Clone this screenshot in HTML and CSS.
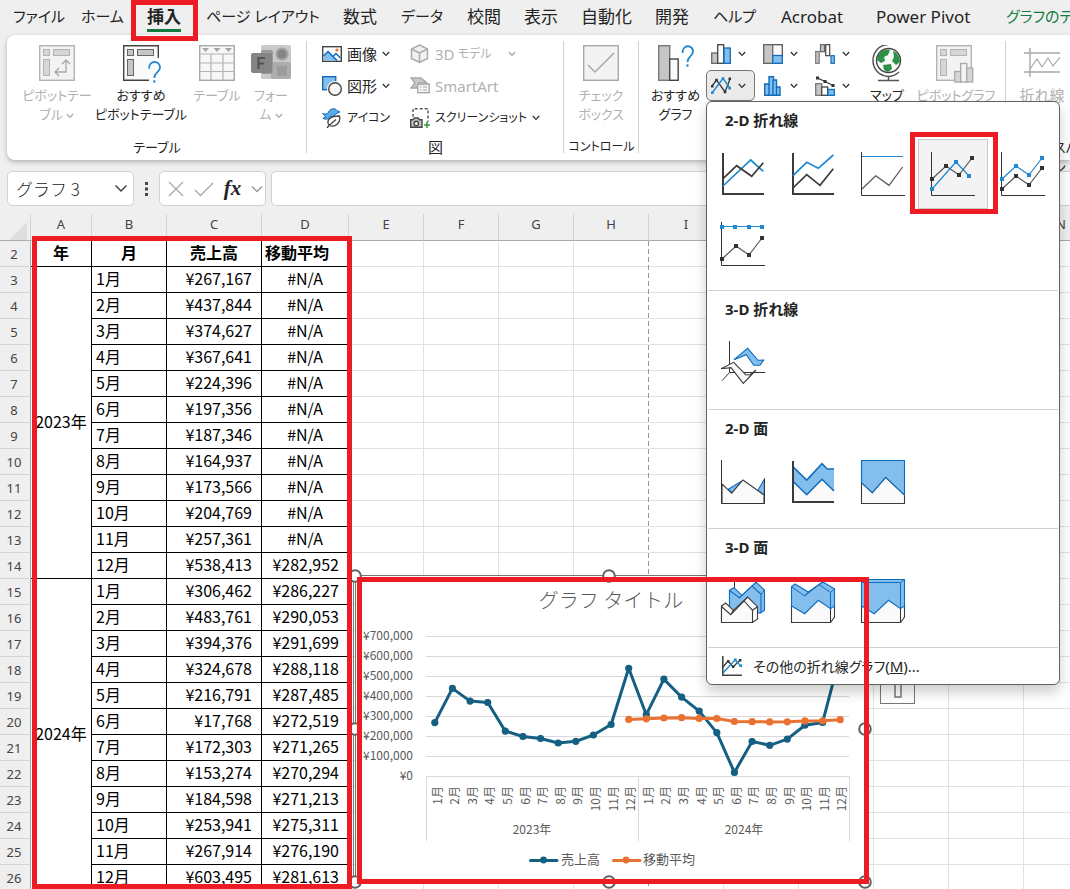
FILE: index.html
```html
<!DOCTYPE html>
<html lang="ja">
<head>
<meta charset="utf-8">
<meta name="viewport" content="width=device-width, initial-scale=1">
<title>グラフの挿入</title>
<link rel="stylesheet" href="styles.css">
</head>
<body>
<svg class="defs" aria-hidden="true">
  <symbol id="chev" viewBox="0 0 8 6"><path d="M.8 1L4 4.4L7.2 1" fill="none" stroke="currentColor" stroke-width="1.3"/></symbol>
  <symbol id="pivot" viewBox="0 0 36 36"><rect x=".7" y=".7" width="34.6" height="34.6" fill="#f3f3f3" stroke="#b3b3b3" stroke-width="1.4"/><g fill="#d6d6d6" stroke="#b3b3b3"><rect x="4.500" y="4.500" width="6" height="6"/><rect x="14.500" y="4.500" width="16" height="6"/><rect x="4.500" y="14.500" width="6" height="16"/></g></symbol>
</svg>
<div class="app">
  <nav class="tabs">
    <button>ファイル</button>
    <button>ホーム</button>
    <button class="current">挿入</button>
    <button>ページ レイアウト</button>
    <button class="kanji">数式</button>
    <button>データ</button>
    <button class="kanji">校閲</button>
    <button class="kanji">表示</button>
    <button class="kanji">自動化</button>
    <button class="kanji">開発</button>
    <button>ヘルプ</button>
    <button class="kanji">Acrobat</button>
    <button class="kanji">Power Pivot</button>
    <button class="context">グラフのデ</button>
  </nav>

  <section class="ribbon">
    <div class="group g-table">
      <div class="bigs">
        <button class="big off">
          <svg width="36" height="38" viewBox="0 0 36 38"><use href="#pivot" width="36" height="36"/><path d="M16 27H27V15M20 23L16 27L20 31M23 19L27 15L31 19" fill="none" stroke="#a8a8a8" stroke-width="1.3"/></svg>
          <span>ピボットテー<br>ブル <svg class="chev"><use href="#chev"/></svg></span>
        </button>
        <button class="big">
          <svg width="36" height="38" viewBox="0 0 36 38" overflow="visible"><path d="M35.300 13V.7H.7V35.300H26" fill="#fafafa" stroke="#444" stroke-width="1.4"/><g fill="#c8c6c4" stroke="#666"><rect x="4.500" y="4.500" width="6" height="6"/><rect x="14.500" y="4.500" width="16" height="6"/><rect x="4.500" y="14.500" width="6" height="16"/></g><path d="M26 23.500C26 14.500 37 15.500 37 22.500C37 27 31.300 27.500 31.300 33" fill="none" stroke="#1e88d0" stroke-width="1.8"/><rect x="30.300" y="35.300" width="2" height="2.400" fill="#1e88d0"/></svg>
          <span>おすすめ<br>ピボットテーブル</span>
        </button>
        <button class="big off">
          <svg width="36" height="38" viewBox="0 0 36 38"><rect x=".7" y=".7" width="34.600" height="34.600" fill="#f7f7f7" stroke="#a8a8a8" stroke-width="1.4"/><path d="M0 9H36M0 18H36M0 26.500H36M12 9V36M24 9V36" stroke="#b3b3b3" stroke-width="1.200"/><path d="M3 3H10L6.500 7ZM14.500 3H21.500L18 7ZM26 3H33L29.500 7Z" fill="#a6a6a6"/></svg>
          <span>テーブル</span>
        </button>
        <button class="big off">
          <svg width="40" height="38" viewBox="0 0 40 38"><rect x="10" y="0" width="30" height="34" rx="2" fill="#c9c9c9"/><rect x="20" y="17" width="20" height="17" rx="2" fill="#adadad"/><circle cx="31" cy="9" r="6.500" fill="#a2a2a2"/><circle cx="31" cy="9" r="4.500" fill="#868686"/><rect x="26" y="21" width="10" height="10" fill="#9c9c9c"/><rect x="10" y="5" width="12" height="24" rx="2" fill="#9b9b9b"/><rect x="0" y="8" width="21" height="20" rx="2" fill="#858585"/><path d="M7.500 24V13H14M7.500 18.500H13" fill="none" stroke="#555" stroke-width="2.200"/></svg>
          <span>フォー<br>ム <svg class="chev"><use href="#chev"/></svg></span>
        </button>
      </div>
      <div class="caption">テーブル</div>
    </div>

    <div class="group g-pics">
      <div class="rows">
        <button class="small kanji"><svg class="ic" viewBox="0 0 20 20"><rect x=".7" y="2.700" width="18.600" height="14.600" fill="#fff" stroke="#444" stroke-width="1.400"/><path d="M1.500 12L6 7.500L16 16.500H1.500Z" fill="#83beec"/><path d="M1.500 12L6 7.500L15 16.500M11 12.500L14 9.500L18.500 14" fill="none" stroke="#0f6cbd" stroke-width="1.500"/><circle cx="15" cy="6" r="1.600" fill="#e8762c"/></svg>画像<svg class="chev"><use href="#chev"/></svg></button>
        <button class="small off"><svg class="ic" viewBox="0 0 20 20"><path d="M9.500 1L17.500 5V14.500L9.500 18.500L1.500 14.500V5ZM1.500 5L9.500 9V18.500M9.500 9L17.500 5" fill="#f2f2f2" stroke="#ababab" stroke-width="1.500"/></svg><span class="kanji">3D</span>&nbsp;モデル<svg class="chev far"><use href="#chev"/></svg></button>
        <button class="small kanji"><svg class="ic" viewBox="0 0 20 20"><rect x=".7" y=".7" width="13" height="13" fill="#83beec" stroke="#0f6cbd" stroke-width="1.400"/><circle cx="13" cy="13" r="8" fill="#fff"/><circle cx="13" cy="13" r="6.300" fill="#fafafa" stroke="#444" stroke-width="1.400"/></svg>図形<svg class="chev"><use href="#chev"/></svg></button>
        <button class="small off"><svg class="ic" viewBox="0 0 20 20"><path d="M1 2H11L17 7H9L7 12H1L5 7Z" fill="#c8c8c8" stroke="#a8a8a8" stroke-width="1.400"/><rect x="7.700" y="8.200" width="11.600" height="8.500" fill="#f5f5f5" stroke="#a8a8a8" stroke-width="1.400"/><path d="M10 11H11.500M13 11H17M10 14H11.500M13 14H17" stroke="#a8a8a8"/></svg><span class="kanji">SmartArt</span></button>
        <button class="small"><svg class="ic" viewBox="0 0 20 20"><path d="M.5 5.500C2.500 6.500 5 6 6.500 4.500C7 .5 13-.5 15 2.500L18 4L14.500 5.500C13.500 8 10.500 8 8 9C6 11.500 3 12 1 10L4 9L.5 5.500Z" fill="#5aa9e6" stroke="#0f6cbd"/><path d="M7 17.500C3.500 11.500 9 8 17.500 8C19 14 14 20 7 17.500L14 11.500M7 17.500L5 20" fill="#fff" stroke="#444" stroke-width="1.300"/></svg>アイコン</button>
        <button class="small"><svg class="ic" viewBox="0 0 20 20" overflow="visible"><path d="M3 9V.7H18V14" fill="none" stroke="#555" stroke-width="1.400" stroke-dasharray="3 2"/><path d="M.7 11.700H3L4.500 10H8L9.500 11.700H12V19.300H.7Z" fill="#c8c6c4" stroke="#444" stroke-width="1.400"/><circle cx="6.300" cy="15.400" r="2.200" fill="#fff" stroke="#444" stroke-width="1.400"/><path d="M17 14V20M14 17H20" stroke="#2ea043" stroke-width="1.600"/></svg>スクリーンショット<svg class="chev"><use href="#chev"/></svg></button>
      </div>
      <div class="caption kanji">図</div>
    </div>

    <div class="group g-ctl">
      <div class="bigs">
        <button class="big off">
          <svg width="36" height="38" viewBox="0 0 36 38"><rect x=".7" y=".7" width="34.600" height="34.600" fill="#f3f3f3" stroke="#a8a8a8" stroke-width="1.400"/><path d="M5 20L12 27L31 8" fill="none" stroke="#a8a8a8" stroke-width="1.500"/></svg>
          <span>チェック<br>ボックス</span>
        </button>
      </div>
      <div class="caption">コントロール</div>
    </div>

    <div class="group g-charts">
      <button class="big rec">
        <svg width="36" height="38" viewBox="0 0 36 38" overflow="visible"><rect x=".7" y=".7" width="11" height="34.600" fill="#c8c6c4" stroke="#777" stroke-width="1.400"/><rect x="11.700" y="14" width="8.500" height="21.300" fill="#fafafa" stroke="#444" stroke-width="1.400"/><path d="M24.500 8C24.500-1 35-.5 35 6.500C35 11 29.500 11.500 29.500 17" fill="none" stroke="#1e88d0" stroke-width="1.800"/><rect x="28.500" y="19.300" width="2" height="2.400" fill="#1e88d0"/></svg>
        <span>おすすめ<br>グラフ</span>
      </button>
      <div class="kinds">
        <button aria-label="縦棒"><svg class="ic" viewBox="0 0 20 20"><rect x=".7" y="9" width="6" height="10.300" fill="#c8c6c4" stroke="#666" stroke-width="1.300"/><rect x="6.700" y=".7" width="6" height="18.600" fill="#fafafa" stroke="#444" stroke-width="1.300"/><rect x="13" y="4" width="6.300" height="15.300" fill="#83beec" stroke="#0f6cbd" stroke-width="1.300"/></svg><svg class="chev"><use href="#chev"/></svg></button>
        <button aria-label="階層"><svg class="ic" viewBox="0 0 20 20"><rect x=".7" y=".7" width="18.600" height="18.600" fill="#fafafa" stroke="#555" stroke-width="1.300"/><rect x=".7" y=".7" width="9" height="18.600" fill="#c8c6c4" stroke="#666" stroke-width="1.300"/><rect x="9.700" y="11.500" width="9.600" height="7.800" fill="#83beec" stroke="#0f6cbd" stroke-width="1.300"/></svg><svg class="chev"><use href="#chev"/></svg></button>
        <button aria-label="ウォーターフォール"><svg class="ic" viewBox="0 0 20 20"><rect x=".7" y="7.500" width="3.500" height="11.800" fill="#c8c6c4" stroke="#777" stroke-width="1.200"/><rect x="5.500" y=".7" width="4" height="7" fill="#c8c6c4" stroke="#666" stroke-width="1.200"/><rect x="10.700" y=".7" width="4" height="11" fill="#fff" stroke="#444" stroke-width="1.200"/><rect x="16" y="11.700" width="3.300" height="7.600" fill="#83beec" stroke="#0f6cbd" stroke-width="1.200"/></svg><svg class="chev"><use href="#chev"/></svg></button>
        <button aria-label="折れ線" class="open"><svg class="ic" viewBox="0 0 20 20"><path d="M1 10L5.500 4L14 16L19 3" fill="none" stroke="#333" stroke-width="1.300"/><path d="M1 17L12 2.500L19 12" fill="none" stroke="#1e88d0" stroke-width="1.400"/><path d="M0 9H2.500V11.500H0ZM4.200 2.700H6.800V5.300H4.200ZM12.700 14.700H15.300V17.300H12.700ZM17.500 1.500H20V4H17.500Z" fill="#333"/><path d="M0 15.500H2.600V18.100H0ZM10.700 1.200H13.300V3.800H10.700ZM17.400 11H20V13.600H17.400Z" fill="#1e88d0"/></svg><svg class="chev"><use href="#chev"/></svg></button>
        <button aria-label="統計"><svg class="ic" viewBox="0 0 20 20"><path d="M1.700 19.300V8H6V.7H10.500V4H13.500V11H17V19.300Z" fill="#83beec" stroke="#0f6cbd" stroke-width="1.400"/><path d="M6 8V19M10 4V19M13.500 11V19" stroke="#0f6cbd" stroke-width="1.400"/></svg><svg class="chev"><use href="#chev"/></svg></button>
        <button aria-label="組み合わせ"><svg class="ic" viewBox="0 0 20 20"><rect x=".7" y="7.700" width="6" height="11.600" fill="#c8c6c4" stroke="#777" stroke-width="1.300"/><rect x="6.700" y="11" width="6" height="8.300" fill="#fff" stroke="#444" stroke-width="1.300"/><rect x="13" y="13.500" width="6.300" height="5.800" fill="#83beec" stroke="#0f6cbd" stroke-width="1.300"/><path d="M2.500 2L10 5.500L18 9.500" stroke="#333" stroke-width="1.200"/><path d="M1 .5H4V3.500H1ZM8.500 4H11.500V7H8.500ZM16.500 8H19.500V11H16.500Z" fill="#333"/></svg><svg class="chev"><use href="#chev"/></svg></button>
      </div>
      <button class="big map">
        <svg width="36" height="38" viewBox="0 0 36 38"><circle cx="19.500" cy="15.500" r="12" fill="#fafafa" stroke="#444" stroke-width="1.400"/><path d="M9 10C12 5 17 4 21 5L19 10L15 12L16 16L12 18L8 15ZM24 6C29 8 31 12 31 17L27 20L23 16L25 12ZM14 20L22 19L23 24L19 27L15 25Z" fill="#2e9148"/><path d="M19 -.5C-1 1 -1 30 19 31.500C23 31.500 26 30.500 30 27M19.500 31.500V35.500M9 35.500H30" fill="none" stroke="#555" stroke-width="1.500"/></svg>
        <span>マップ</span>
      </button>
      <button class="big off pg">
        <svg width="40" height="38" viewBox="0 0 40 38"><use href="#pivot" width="36" height="36"/><g fill="#d6d6d6" stroke="#a8a8a8" stroke-width="1.300"><rect x="18.700" y="26.500" width="6" height="10.500"/><rect x="24.700" y="18.500" width="6" height="18.500" fill="#f5f5f5"/><rect x="30.700" y="23" width="6" height="14"/></g></svg>
        <span>ピボットグラフ</span>
      </button>
    </div>

    <div class="group g-spark">
      <button class="big off">
        <svg width="36" height="38" viewBox="0 0 36 38"><path d="M0 8H36M0 27H36M6 3V32" stroke="#a8a8a8" stroke-width="1.400"/><path d="M6 24L13 14L18 22L24 13L29 21L36 12" fill="none" stroke="#a8a8a8" stroke-width="1.200"/></svg>
        <span class="kana-kanji">折れ線</span>
      </button>
      <div class="caption">スパークライン</div>
    </div>
  </section>

  <div class="formula">
    <div class="box name"><input aria-label="名前ボックス" value="グラフ 3"><button aria-label="名前の一覧"><svg width="14" height="9" viewBox="0 0 14 9"><path d="M1.500 1.500L7 7L12.500 1.500" fill="none" stroke="#444" stroke-width="1.500"/></svg></button></div>
    <svg class="dots" width="3" height="14" viewBox="0 0 3 14"><path d="M0 0H3V3H0ZM0 5.500H3V8.500H0ZM0 11H3V14H0Z" fill="#444"/></svg>
    <div class="box fx">
      <button aria-label="キャンセル"><svg width="16" height="16" viewBox="0 0 16 16"><path d="M1 1L15 15M15 1L1 15" stroke="#a8a8a8" stroke-width="1.300"/></svg></button>
      <button aria-label="入力"><svg width="20" height="16" viewBox="0 0 20 16"><path d="M1 9L6.500 14.500L19 2" fill="none" stroke="#a8a8a8" stroke-width="1.300"/></svg></button>
      <button aria-label="関数の挿入" class="fn">fx</button>
      <button aria-label="関数の一覧" class="pale"><svg width="12" height="8" viewBox="0 0 12 8"><path d="M1 1.500L6 6.500L11 1.500" fill="none" stroke="#999" stroke-width="1.300"/></svg></button>
    </div>
    <input class="box expr" aria-label="数式バー">
  </div>

  <main class="sheet">
    <table class="grid">
      <colgroup><col class="c-no"><col class="c-a"><col class="c-b"><col class="c-c"><col class="c-d"><col class="c-x" span="10"></colgroup>
      <thead><tr><th class="corner"><svg width="18" height="18" viewBox="0 0 18 18"><path d="M18 0V18H0Z" fill="#dedede"/></svg></th><th>A</th><th>B</th><th>C</th><th>D</th><th>E</th><th>F</th><th>G</th><th>H</th><th>I</th><th>J</th><th>K</th><th>L</th><th>M</th><th>N</th></tr></thead>
      <tbody>
        <tr class="titles"><th>2</th><td>年</td><td>月</td><td>売上高</td><td class="left">移動平均</td><td class="rest" colspan="10"></td></tr>
        <tr><th>3</th><td class="year" rowspan="12">2023年</td><td>1月</td><td>¥267,167</td><td class="na">#N/A</td><td class="rest" colspan="10"></td></tr>
        <tr><th>4</th><td>2月</td><td>¥437,844</td><td class="na">#N/A</td><td class="rest" colspan="10"></td></tr>
        <tr><th>5</th><td>3月</td><td>¥374,627</td><td class="na">#N/A</td><td class="rest" colspan="10"></td></tr>
        <tr><th>6</th><td>4月</td><td>¥367,641</td><td class="na">#N/A</td><td class="rest" colspan="10"></td></tr>
        <tr><th>7</th><td>5月</td><td>¥224,396</td><td class="na">#N/A</td><td class="rest" colspan="10"></td></tr>
        <tr><th>8</th><td>6月</td><td>¥197,356</td><td class="na">#N/A</td><td class="rest" colspan="10"></td></tr>
        <tr><th>9</th><td>7月</td><td>¥187,346</td><td class="na">#N/A</td><td class="rest" colspan="10"></td></tr>
        <tr><th>10</th><td>8月</td><td>¥164,937</td><td class="na">#N/A</td><td class="rest" colspan="10"></td></tr>
        <tr><th>11</th><td>9月</td><td>¥173,566</td><td class="na">#N/A</td><td class="rest" colspan="10"></td></tr>
        <tr><th>12</th><td>10月</td><td>¥204,769</td><td class="na">#N/A</td><td class="rest" colspan="10"></td></tr>
        <tr><th>13</th><td>11月</td><td>¥257,361</td><td class="na">#N/A</td><td class="rest" colspan="10"></td></tr>
        <tr><th>14</th><td>12月</td><td>¥538,413</td><td>¥282,952</td><td class="rest" colspan="10"></td></tr>
        <tr><th>15</th><td class="year" rowspan="12">2024年</td><td>1月</td><td>¥306,462</td><td>¥286,227</td><td class="rest" colspan="10"></td></tr>
        <tr><th>16</th><td>2月</td><td>¥483,761</td><td>¥290,053</td><td class="rest" colspan="10"></td></tr>
        <tr><th>17</th><td>3月</td><td>¥394,376</td><td>¥291,699</td><td class="rest" colspan="10"></td></tr>
        <tr><th>18</th><td>4月</td><td>¥324,678</td><td>¥288,118</td><td class="rest" colspan="10"></td></tr>
        <tr><th>19</th><td>5月</td><td>¥216,791</td><td>¥287,485</td><td class="rest" colspan="10"></td></tr>
        <tr><th>20</th><td>6月</td><td>¥17,768</td><td>¥272,519</td><td class="rest" colspan="10"></td></tr>
        <tr><th>21</th><td>7月</td><td>¥172,303</td><td>¥271,265</td><td class="rest" colspan="10"></td></tr>
        <tr><th>22</th><td>8月</td><td>¥153,274</td><td>¥270,294</td><td class="rest" colspan="10"></td></tr>
        <tr><th>23</th><td>9月</td><td>¥184,598</td><td>¥271,213</td><td class="rest" colspan="10"></td></tr>
        <tr><th>24</th><td>10月</td><td>¥253,941</td><td>¥275,311</td><td class="rest" colspan="10"></td></tr>
        <tr><th>25</th><td>11月</td><td>¥267,914</td><td>¥276,190</td><td class="rest" colspan="10"></td></tr>
        <tr><th>26</th><td>12月</td><td>¥603,495</td><td>¥281,613</td><td class="rest" colspan="10"></td></tr>
      </tbody>
    </table>
    <div class="pagebreak"></div>
  </main>

  <svg class="chart" viewBox="348 568 526 321" role="img" aria-label="売上高と移動平均の折れ線グラフ">
    <rect x="355.500" y="575.500" width="510" height="306" fill="#fff" stroke="#767676"/>
    <path d="M353.500 582V876" stroke="#767676"/>
    <text class="t-title" x="611" y="608">グラフ タイトル</text>
    <path d="M426 636.500H849M426 656.500H849M426 676.500H849M426 696.500H849M426 716.500H849M426 736.500H849M426 756.500H849M426 776.500H849M426.500 776V841M638.500 776V841M849.500 776V841" stroke="#d9d9d9" fill="none"/>
    <g class="t-axis">
      <text x="413" y="640">¥700,000</text><text x="413" y="660">¥600,000</text><text x="413" y="680">¥500,000</text><text x="413" y="700">¥400,000</text><text x="413" y="720">¥300,000</text><text x="413" y="740">¥200,000</text><text x="413" y="760">¥100,000</text><text x="413" y="780">¥0</text>
      <g transform="rotate(-90)">
        <text x="-786" y="442">1月</text><text x="-786" y="459">2月</text><text x="-786" y="477">3月</text><text x="-786" y="494">4月</text><text x="-786" y="512">5月</text><text x="-786" y="530">6月</text><text x="-786" y="547">7月</text><text x="-786" y="565">8月</text><text x="-786" y="582">9月</text><text x="-786" y="600">10月</text><text x="-786" y="618">11月</text><text x="-786" y="635">12月</text>
        <text x="-786" y="653">1月</text><text x="-786" y="670">2月</text><text x="-786" y="688">3月</text><text x="-786" y="706">4月</text><text x="-786" y="723">5月</text><text x="-786" y="741">6月</text><text x="-786" y="758">7月</text><text x="-786" y="776">8月</text><text x="-786" y="794">9月</text><text x="-786" y="811">10月</text><text x="-786" y="829">11月</text><text x="-786" y="846">12月</text>
      </g>
      <g class="mid"><text x="532" y="834">2023年</text><text x="744" y="834">2024年</text></g>
    </g>
    <defs>
      <marker id="m1" markerWidth="8" markerHeight="8" refX="4" refY="4" markerUnits="userSpaceOnUse"><circle cx="4" cy="4" r="3.600" fill="#156082"/></marker>
      <marker id="m2" markerWidth="8" markerHeight="8" refX="4" refY="4" markerUnits="userSpaceOnUse"><circle cx="4" cy="4" r="3.600" fill="#e97132"/></marker>
    </defs>
    <polyline class="s1" points="434.800,722.600 452.400,688.400 470.100,701.100 487.700,702.500 505.300,731.100 522.900,736.500 540.600,738.500 558.200,743 575.800,741.300 593.400,735 611.100,724.500 628.700,668.300 646.300,714.700 663.900,679.200 681.600,697.100 699.200,711.100 716.800,732.600 734.400,772.400 752.100,741.500 769.700,745.300 787.300,739.100 804.900,725.200 822.600,722.400 840.200,655.300"/>
    <polyline class="s2" points="628.700,719.400 646.300,718.800 663.900,718 681.600,717.700 699.200,718.400 716.800,718.500 734.400,721.500 752.100,721.700 769.700,721.900 787.300,721.800 804.900,720.900 822.600,720.800 840.200,719.700"/>
    <path d="M530.500 860.500H557" stroke="#156082" stroke-width="3" stroke-linecap="round"/><circle cx="543.500" cy="860" r="3.400" fill="#156082"/>
    <path d="M613.500 860.500H640" stroke="#e97132" stroke-width="3" stroke-linecap="round"/><circle cx="626" cy="860" r="3.400" fill="#e97132"/>
    <g class="t-legend"><text x="561" y="864">売上高</text><text x="643" y="864">移動平均</text></g>
    <g fill="#fff" stroke="#606060" stroke-width="2"><circle cx="355" cy="576" r="5.800"/><circle cx="609" cy="576" r="5.800"/><circle cx="355" cy="729" r="5.800"/><circle cx="865" cy="729" r="5.800"/><circle cx="355" cy="882" r="5.800"/><circle cx="609" cy="882" r="5.800"/><circle cx="865" cy="882" r="5.800"/></g>
  </svg>
  <button class="filter" aria-label="グラフ フィルター"><svg width="8" height="14" viewBox="0 0 8 14"><rect x="1" y="0" width="6" height="13" fill="#fff" stroke="#777" stroke-width="1.500"/></svg></button>

  <div class="menu">
    <section>
      <h2>2-D 折れ線</h2>
      <div class="tiles">
        <button aria-label="折れ線"><svg viewBox="0 0 44 44"><path class="ax2" d="M2 1V42H43"/><path class="bl2" d="M2 34L29.700 8L42.300 19.300"/><path class="bk2" d="M2 26.700L15.700 13.700L30.700 24.300L42.300 10.700"/></svg></button>
        <button aria-label="積み上げ折れ線"><svg viewBox="0 0 44 44"><path class="ax2" d="M2 1V42H43"/><path class="bl2" d="M2 23.700L15.700 10.300L27.300 16.300L42.300 3"/><path class="bk2" d="M2 36L15.700 22.700L29 33.300L42.300 16.700"/></svg></button>
        <button aria-label="100% 積み上げ折れ線"><svg viewBox="0 0 44 44"><path class="ax" d="M.5 0V43.500H44"/><path class="bl" d="M1 4.500H42"/><path class="bk" d="M1 37L14.700 23.700L28 33.300L41.700 15"/></svg></button>
        <button aria-label="マーカー付き折れ線" class="picked"><svg viewBox="0 0 44 44"><path class="ax" d="M.5 0V43.500H44"/><path class="bk" d="M1 27L15 14L28 23L41 6"/><path class="bl" d="M1 37L25 10L38 24"/><path class="mk" d="M-1 25h4v4h-4zM13 12h4v4h-4zM26 21h4v4h-4zM39 4h4v4h-4z"/><path class="mb" d="M-1 35h4v4h-4zM23 8h4v4h-4zM36 22h4v4h-4z"/></svg></button>
        <button aria-label="マーカー付き積み上げ折れ線"><svg viewBox="0 0 44 44"><path class="ax" d="M.5 0V43.500H44"/><path class="bk" d="M1 37L15 24L28 33L41 16"/><path class="bl" d="M1 27L15 14L28 23L41 6"/><path class="mb" d="M-1 25h4v4h-4zM13 12h4v4h-4zM26 21h4v4h-4zM39 4h4v4h-4z"/><path class="mk" d="M-1 35h4v4h-4zM13 22h4v4h-4zM26 31h4v4h-4zM39 14h4v4h-4z"/></svg></button>
        <button aria-label="マーカー付き 100% 積み上げ折れ線"><svg viewBox="0 0 44 44"><path class="ax" d="M.5 0V43.500H44"/><path class="bl" d="M1 4.500H41"/><path class="bk" d="M1 37L15 24L28 33L41 16"/><path class="mb" d="M-1 3h4v4h-4zM12 3h4v4h-4zM26 3h4v4h-4zM39 3h4v4h-4z"/><path class="mk" d="M-1 35h4v4h-4zM13 22h4v4h-4zM26 31h4v4h-4zM39 14h4v4h-4z"/></svg></button>
      </div>
    </section>
    <section>
      <h2>3-D 折れ線</h2>
      <div class="tiles">
        <button aria-label="3-D 折れ線"><svg viewBox="0 0 44 44"><path class="ax" d="M8.500 0V31.500H44M8.500 31.500L1 39.700"/><path class="fb" d="M13 18.700L26.700 7.300L37 19.300L42.700 19L39 24.300H32.700L25.300 13.700Z"/><path class="fw" d="M0 27.700L12.700 21.300L25 34L29.500 33.500L35 29L22.300 42.300L10 26.700Z"/></svg></button>
      </div>
    </section>
    <section>
      <h2>2-D 面</h2>
      <div class="tiles">
        <button aria-label="面"><svg viewBox="0 0 44 44"><path class="fb" d="M7.300 29.300L21.300 20.700L11 32.500ZM43.300 19.300L36.700 30.700L43.300 34.700Z"/><path class="fw" d="M1 24L10.700 33.300L22 20L43 35V43.500H1Z"/><path class="ax" d="M.5 0V43.500H43.500V19"/></svg></button>
        <button aria-label="積み上げ面"><svg viewBox="0 0 44 44"><path fill="#fafafa" d="M2 21L15.700 34.700L31 19.300L43 31V42H2Z"/><path fill="#83beec" d="M2 6.700L15.700 20L31 3.700L36.300 9H43V31L31 19.300L15.700 34.700L2 21.300Z"/><path d="M2 6.700L15.700 20L31 3.700L36.300 9H43M43 31L31 19.300L15.700 34.700L2 21.300" fill="none" stroke="#0f6cbd" stroke-width="1.600"/><path class="ax2" d="M2 1V42H43"/></svg></button>
        <button aria-label="100% 積み上げ面"><svg viewBox="0 0 44 44"><path class="fw" d="M.5 22.700L11.300 32.700L24.700 17.300L43.500 35V43.500H.5Z"/><path class="fb" d="M.5 .5H43.500V35L24.700 17.300L11.300 32.700L.5 22.700Z"/></svg></button>
      </div>
    </section>
    <section>
      <h2>3-D 面</h2>
      <div class="tiles">
        <button aria-label="3-D 面"><svg viewBox="0 0 44 44"><path class="ax" d="M13.500 0V12"/><path class="fb" d="M8.500 11.300L13 8.700L21 16.300L35 3.300L43.500 11V31.300L40 33.700H8.500Z"/><path class="fb" d="M8.500 11.500L18.500 18.700L31 7L40 15.300V33.700H8.500Z"/><path class="bb" d="M18.500 18.700L21 16.300M31 7L35 3.300M40 15.300L43.500 11"/><path class="fw" d="M.5 27L4.700 24L12.300 31.300L26.700 18L36.500 27.700V40L31.500 43.500H.5Z"/><path class="fw" d="M.5 27.500L9.700 35.700L23 22L31.500 31.300V43.500H.5ZM9.700 35.700L12.300 31.300M23 22L26.700 18M31.500 31.300L36.500 27.700"/></svg></button>
        <button aria-label="3-D 積み上げ面"><svg viewBox="0 0 44 44"><path class="fw" d="M.5 26V43.500H39.500L43.500 38V25L27 18Z"/><path class="ax" d="M39.500 28V43.500"/><path class="fb" d="M.5 7.700L4 5L17.300 13L31.700 3L43.500 9.700V27L39.500 29.700L27.300 21.300L13.700 34.700L.5 27Z"/><path class="bb" d="M.5 7.700L13.700 17L28 5.500L39.500 13.500V29.700M13.700 17L17.300 13M28 5.500L31.700 3M39.500 13.500L43.500 9.700"/></svg></button>
        <button aria-label="3-D 100% 積み上げ面"><svg viewBox="0 0 44 44"><path class="fw" d="M.5 26V43.500H39.500L43.500 38V25L27 18Z"/><path class="ax" d="M39.500 28V43.500"/><path class="fb" d="M.5 3.500L3.500 .5H43.500V27L39.500 29.700L27.500 21.300L13.300 34.700L.5 27Z"/><path class="bb" d="M.5 3.500H39.500V29.700M39.500 3.500L43.500 .5"/></svg></button>
      </div>
    </section>
    <button class="more"><svg width="20" height="20" viewBox="0 0 20 20"><path d="M.8 0V19.200H20" fill="none" stroke="#444" stroke-width="1.600"/><path d="M1 11L6 5L11 11L18 4" fill="none" stroke="#333" stroke-width="1.200"/><path d="M1 17L13 4L19 10" fill="none" stroke="#1e88d0" stroke-width="1.400"/><path d="M5 4h2.400v2.400h-2.400zM17 3h2.400v2.400h-2.400zM10 9.500h2.400v2.400h-2.400z" fill="#333"/><path d="M12 2.500h2.600v2.600h-2.600zM17.400 8.500h2.600v2.600h-2.600z" fill="#1e88d0"/></svg><span>その他の折れ線グラフ<span class="kanji">(<u>M</u>)...</span></span></button>
  </div>

  <div class="mark mark-tab"></div>
  <div class="mark mark-table"></div>
  <div class="mark mark-chart"></div>
  <div class="mark mark-tile"></div>
</div>
</body>
</html>
```

FILE: styles.css
```css
* { box-sizing: border-box; }
body { margin: 0; font-family: "Noto Sans", "Noto Sans CJK JP", sans-serif; font-size: 13px; color: #242424; background: #efefef; font-feature-settings: "palt"; }
button, input { font: inherit; font-feature-settings: inherit; color: inherit; background: none; border: 0; padding: 0; margin: 0; white-space: nowrap; }
svg { flex: none; display: block; }
.defs { position: absolute; width: 0; height: 0; }
.app { position: relative; height: 100vh; overflow: hidden; display: flex; flex-direction: column; }

.tabs { display: grid; grid-template-columns: 68px 66px 59px 137px 58px 66px 57px 57px 74px 58px 68px 95px 130px auto; height: 35px; flex: none; padding-left: 13px; font-size: 15px; }
.tabs button { text-align: left; height: 33px; line-height: 33px; justify-self: start; }
.tabs .kanji { font-size: 17px; }
.tabs .current { font-size: 17px; font-weight: 700; background: linear-gradient(#107c41, #107c41) 0 29px / 100% 3px no-repeat; }
.tabs .context { color: #107c41; }

.ribbon { display: flex; flex: none; height: 125px; margin-left: 7px; background: #fff; border-radius: 8px 0 0 8px; box-shadow: 0 2px 5px rgba(0, 0, 0, .25); }
.group { position: relative; flex: none; padding-top: 3px; }
.group::after { content: ""; position: absolute; right: 0; top: 6px; bottom: 7px; width: 1px; background: #d1d1d1; }
.g-table { width: 300px; }
.g-pics { width: 257px; }
.g-ctl { width: 75px; }
.g-charts { width: 367px; display: flex; }
.g-spark { width: 120px; }
.caption { text-align: center; line-height: 20px; height: 20px; font-size: 13px; }
.caption.kanji { font-size: 15px; }
.g-ctl .caption { font-size: 12px; }
.g-spark .caption { text-align: left; padding-left: 48px; }
.bigs { display: flex; height: 99px; }
.big { display: flex; flex-direction: column; align-items: center; justify-content: flex-start; padding-top: 7px; gap: 3px; line-height: 19px; height: 99px; }
.g-table .big:nth-child(1) { width: 100px; }
.g-table .big:nth-child(2) { width: 68px; }
.g-table .big:nth-child(3) { width: 84px; }
.g-table .big:nth-child(4) { width: 24px; }
.g-ctl .big { width: 74px; }
.rec { width: 67px; padding-left: 6px; }
.map { width: 56px; }
.pg { width: 82px; }
.g-spark .big { width: 72px; height: 99px; }
.kana-kanji { font-size: 15px; }
.off { color: #b1b1b1; }
.chev { width: 8px; height: 6px; display: inline-block; color: #333; }
.off .chev { color: #a8a8a8; }
.rows { display: grid; grid-template-columns: 88px auto; grid-auto-rows: 32px; padding-left: 15px; height: 99px; justify-content: start; }
.small { display: flex; align-items: center; font-size: 12px; line-height: 18px; text-align: left; }
.small .ic { margin-right: 5px; }
.small .chev { margin-left: 5px; }
.small .far { margin-left: 16px; }
.ic { width: 20px; height: 20px; }
.small.kanji, .small .kanji { font-size: 15px; }
.kinds { display: grid; grid-template-columns: 49px 49px 49px; grid-auto-rows: 31px; column-gap: 3px; row-gap: 1px; }
.kinds button { display: flex; align-items: center; gap: 7px; padding-left: 4px; border: 1px solid transparent; border-radius: 5px; }
.kinds .open { background: #ebebeb; border-color: #777; }

.formula { display: flex; flex: none; align-items: center; height: 35px; margin: 11px 0 8px 7px; }
.box { height: 35px; background: #fff; border: 1px solid #d1d1d1; border-radius: 5px; display: flex; align-items: center; }
.name { width: 127px; padding: 0 5px 0 8px; justify-content: space-between; }
.name input { width: 90px; font-family: "Noto Sans CJK JP", sans-serif; font-size: 17px; font-weight: 300; font-feature-settings: normal; }
.dots { margin: 0 11px 0 11px; }
.fx { width: 107px; padding: 0 2px 0 8px; justify-content: space-between; }
.fn { font-family: "Liberation Serif", serif; font-style: italic; font-weight: 700; font-size: 21px; }
.expr { flex: 1; margin-left: 5px; border-radius: 5px 0 0 5px; border-right: 0; min-width: 0; }

.sheet { position: relative; flex: 1; min-height: 0; overflow: hidden; background: #fff; }
.grid { table-layout: fixed; width: 1099px; border-collapse: separate; border-spacing: 0; font-family: "Noto Sans CJK JP", sans-serif; font-size: 16px; font-weight: 400; font-feature-settings: normal; color: #000; }
.c-no { width: 31px; }
.c-a { width: 61px; }
.c-b, .c-x { width: 75px; }
.c-c { width: 95px; }
.c-d { width: 87px; }
.grid th, .grid td { padding: 0; height: 26px; line-height: 22px; white-space: nowrap; overflow: hidden; border-right: 1px solid #000; border-bottom: 1px solid #000; text-align: right; }
.grid td { padding-bottom: 3px; }
.grid th { background: #efefef; font-family: "Noto Sans", sans-serif; font-size: 13px; font-weight: 400; color: #444; text-align: center; border-color: #d4d4d4; }
.grid thead th { border-bottom-color: #ababab; height: 27px; line-height: 20px; padding-bottom: 6px; }
.grid tbody th { border-right-color: #ababab; padding-right: 2px; }
.grid .corner { padding: 7px 0 0 9px; }
.grid td:nth-last-child(4) { text-align: left; padding-left: 4px; }
.grid td:nth-last-child(3), .grid td:nth-last-child(2) { padding-right: 9px; }
.grid td.year { text-align: center; padding: 0 0 4px; }
.grid td.na.na { text-align: center; padding-right: 0; }
.grid .titles td.titles, .grid tr.titles td { text-align: center; font-weight: 700; padding-left: 0; padding-right: 0; }
.grid tr.titles td.left { text-align: left; padding-left: 3px; }
.grid td.rest { border-right: 0; border-bottom-color: #e1e1e1; background: repeating-linear-gradient(to right, transparent 0 74px, #e1e1e1 74px 75px); }
.pagebreak { position: absolute; left: 648px; top: 27px; bottom: 0; width: 1px; background: repeating-linear-gradient(#999 0 5px, #fff 5px 8px); }

.chart { position: absolute; left: 348px; top: 568px; width: 526px; height: 321px; font-family: "Noto Sans CJK JP", sans-serif; font-weight: 400; font-feature-settings: normal; fill: #595959; }
.t-title { font-size: 20px; font-weight: 300; text-anchor: middle; }
.t-axis { font-size: 12px; text-anchor: end; }
.mid { text-anchor: middle; }
.t-legend { font-size: 13px; }
.s1, .s2 { fill: none; stroke-width: 3; stroke-linejoin: round; stroke-linecap: round; }
.s1 { stroke: #156082; marker-start: url(#m1); marker-mid: url(#m1); marker-end: url(#m1); }
.s2 { stroke: #e97132; marker-start: url(#m2); marker-mid: url(#m2); marker-end: url(#m2); }
.filter { position: absolute; left: 880px; top: 669px; width: 35px; height: 35px; border: 1px solid #767676; background: #fff; display: flex; justify-content: center; align-items: flex-end; padding-bottom: 5px; }

.menu { position: absolute; left: 706px; top: 101px; width: 354px; padding: 0 1px; background: #fff; border: 1px solid #616161; border-radius: 6px; box-shadow: 0 7px 13px rgba(0, 0, 0, .2); }
.menu section { border-bottom: 1px solid #d1d1d1; padding-bottom: 11px; }
.menu h2 { margin: 0; padding-left: 17px; font-size: 15px; line-height: 37px; font-weight: 700; }
.tiles { display: grid; grid-template-columns: repeat(5, 70px); grid-auto-rows: 70px; }
.tiles button { display: flex; align-items: center; justify-content: center; }
.tiles svg { width: 44px; height: 44px; overflow: visible; }
.tiles .picked { background: #f3f3f3; border: 1px solid #c8c8c8; }
.ax, .ax2, .bk, .bl, .bk2, .bl2, .bb { fill: none; }
.ax { stroke: #333; stroke-width: 1; }
.ax2 { stroke: #3b3b3b; stroke-width: 2; }
.bk { stroke: #555; stroke-width: 1.2; }
.bk2 { stroke: #3b3b3b; stroke-width: 1.7; }
.bl { stroke: #1e88d0; stroke-width: 1.2; }
.bl2 { stroke: #1e88d0; stroke-width: 1.7; }
.bb { stroke: #0f6cbd; stroke-width: 1; }
.mk { fill: #333; }
.mb { fill: #1e88d0; }
.fb { fill: #83beec; stroke: #0f6cbd; stroke-width: 1.1; }
.fw { fill: #fafafa; stroke: #3b3b3b; stroke-width: 1.1; }
.more { display: flex; align-items: center; gap: 11px; width: 100%; height: 36px; padding-left: 14px; font-size: 14px; }
.more .kanji { font-size: 15px; }

.mark { position: absolute; border: 5px solid #ed1c24; pointer-events: none; }
.mark-tab { left: 131px; top: 0; width: 67px; height: 41px; }
.mark-table { left: 32px; top: 236px; width: 320px; bottom: 0; }
.mark-chart { left: 357px; top: 577px; width: 512px; height: 307px; }
.mark-tile { left: 910px; top: 132px; width: 88px; height: 82px; }
```
